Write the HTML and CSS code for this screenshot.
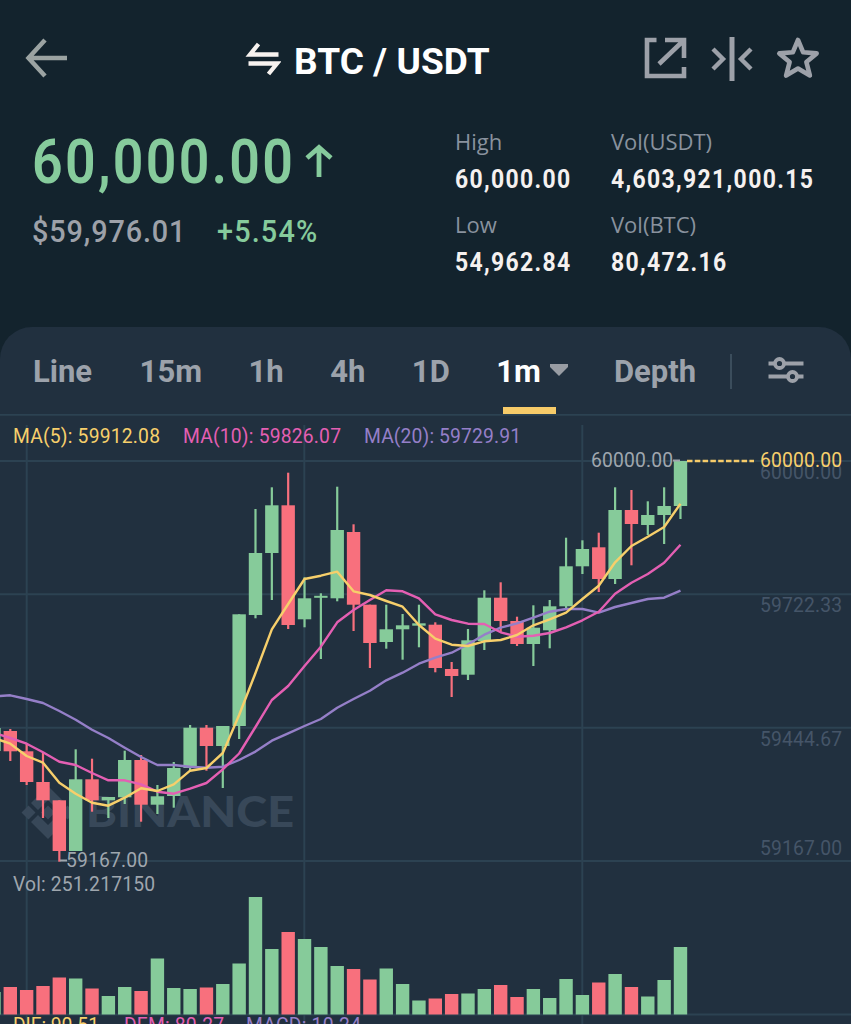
FILE: index.html
```html
<!DOCTYPE html>
<html lang="en">
<head>
<meta charset="utf-8">
<title>BTC / USDT</title>
<link rel="stylesheet" href="styles.css">
</head>
<body>
<main class="app">
  <header class="topbar">
    <svg class="icon back" viewBox="0 0 44 42" width="44" height="42"><path d="M42 20H4M20 2L3.500 20l16.500 18" stroke-width="4.500"/></svg>
    <div class="pair">
      <svg class="icon swap" viewBox="0 0 36 36" width="36" height="36"><path d="M33.500 14.500H5L13.500 4M3.500 23.500H32L23.500 34" stroke-width="4.300"/></svg>
      <h1 class="pair-name">BTC / USDT</h1>
    </div>
    <div class="actions">
      <svg class="icon" viewBox="0 0 44 44" width="44" height="44"><path d="M13.500 4H4v36h37V31M22 4h19v18M39 6L16 28" stroke-width="4.600"/></svg>
      <svg class="icon" viewBox="0 0 44 46" width="44" height="46"><path d="M22 1v44" stroke-width="5"/><path d="M3 13l10 10L3 33M41 13L31 23l10 10" stroke-width="4.400"/></svg>
      <svg class="icon" viewBox="0 0 44 44" width="44" height="44"><path d="M22 4l5.200 12.300 13.500 1.100-10.300 8.700 3.500 13.400L22 32.500 10.100 39.500l3.500-13.400L3.300 17.400l13.500-1.100z" stroke-width="4.600" stroke-linejoin="round"/></svg>
    </div>
  </header>

  <section class="quote">
    <div class="price-block">
      <div class="price-row">
        <span class="price">60,000.00</span>
        <svg class="icon up" viewBox="0 0 28 34" width="28" height="34"><path d="M14 33V4M2 14L14 3.500 26 14" stroke-width="4.800"/></svg>
      </div>
      <div class="sub-row"><span class="fiat">$59,976.01</span><span class="change">+5.54%</span></div>
    </div>
    <dl class="stats">
      <div class="stat"><dt>High</dt><dd>60,000.00</dd></div>
      <div class="stat"><dt>Vol(USDT)</dt><dd>4,603,921,000.15</dd></div>
      <div class="stat"><dt>Low</dt><dd>54,962.84</dd></div>
      <div class="stat"><dt>Vol(BTC)</dt><dd>80,472.16</dd></div>
    </dl>
  </section>

  <section class="panel">
    <nav class="tabs">
      <span class="tab first">Line</span>
      <span class="tab">15m</span>
      <span class="tab">1h</span>
      <span class="tab">4h</span>
      <span class="tab">1D</span>
      <span class="tab active">1m<svg class="caret" viewBox="0 0 18 12" width="18" height="12"><path d="M0 0h18v3L9 12 0 3z"/></svg></span>
      <span class="tab">Depth</span>
      <i class="divider"></i>
      <svg class="icon sliders" viewBox="0 0 36 28" width="36" height="28"><g stroke-width="4.200"><path d="M.500 7.500H7M16 7.500h19.500M.500 20.500H20M29 20.500h6.500"/><circle cx="11.500" cy="7.500" r="4.500" stroke-width="3.800"/><circle cx="24.500" cy="20.500" r="4.500" stroke-width="3.800"/></g></svg>
    </nav>
    <svg class="chart" id="chart" viewBox="0 414 851 610" width="851" height="610">
      <g class="grid">
        <path d="M0 414.700H851M0 461H851M0 594.300H851M0 727.700H851M0 861H851M0 1014.500H851"/>
        <path d="M26.700 425V1024M304.300 425V1024M582.300 425V1024"/>
      </g>
      <g class="watermark">
        <path d="M48 786l17 17-7 7-10-10-10 10-7-7zM28.500 805.500l7 7-7 7-7-7zM67.500 805.500l7 7-7 7-7-7zM48 805.500l7 7-7 7-7-7zM48 839l17-17-7-7-10 10-10-10-7 7z"/>
        <text x="86" y="827" textLength="208" lengthAdjust="spacingAndGlyphs">BINANCE</text>
      </g>
      <g id="volumes"></g>
      <g id="candles"></g>
      <g id="averages"></g>
      <path class="last-line" d="M687 461H754"/>
      <path class="tick" d="M673 460.500H680M60 860.500H67"/>
      <g class="label">
        <text class="ma5" x="13" y="443" textLength="147">MA(5): 59912.08</text>
        <text class="ma10" x="183" y="443" textLength="158">MA(10): 59826.07</text>
        <text class="ma20" x="364" y="443" textLength="157">MA(20): 59729.91</text>
        <text x="591" y="466.500" textLength="82">60000.00</text>
        <text x="66" y="866.500" textLength="82">59167.00</text>
        <text x="13" y="891" textLength="142">Vol: 251.217150</text>
        <g class="axis">
          <text x="760" y="478.500" textLength="82">60000.00</text>
          <text x="760" y="612" textLength="82">59722.33</text>
          <text x="760" y="745.500" textLength="82">59444.67</text>
          <text x="760" y="855" textLength="82">59167.00</text>
        </g>
        <text class="last" x="760" y="466.500" textLength="82">60000.00</text>
        <text class="ma5" x="13" y="1032" textLength="86">DIF: 90.51</text>
        <text class="ma10" x="124" y="1032" textLength="100">DEM: 80.27</text>
        <text class="ma20" x="246" y="1032" textLength="115">MACD: 10.24</text>
      </g>
    </svg>
  </section>
</main>
<script src="chart.js"></script>
</body>
</html>
```
FILE: styles.css
```css
* { box-sizing: border-box; }
body { margin: 0; background: #13232d; font-family: Roboto, "Liberation Sans", sans-serif; }
.app { width: 851px; height: 1024px; overflow: hidden; display: flex; flex-direction: column; background: #13232d; }
.icon { display: block; fill: none; stroke: #9da1a9; }

.topbar { height: 122px; flex: none; display: grid; grid-template-columns: 220px 1fr 220px; padding: 36px 31px 0 25px; }
.back { margin-top: 2px; stroke: #9ba3a2; }
.pair { display: flex; gap: 13px; align-items: flex-start; }
.swap { stroke: #f7f2ef; margin-top: 4px; }
.pair-name { margin: 4px 0 0; font-size: 37px; line-height: 43px; font-weight: 700; letter-spacing: .1px; color: #fff; white-space: nowrap; }
.actions { display: flex; gap: 22.500px; justify-content: flex-end; }

.quote { height: 205px; flex: none; display: flex; padding: 0 0 0 32px; }
.price-block { width: 423px; padding-top: 6px; }
.price-row { display: flex; align-items: flex-start; height: 79px; }
.price { width: 273px; font-size: 61px; line-height: 68px; font-weight: 600; color: #86cb9c; transform: scaleX(.88); transform-origin: 0 0; letter-spacing: 2.600px; }
.up { stroke: #86cb9c; margin-top: 16px; }
.sub-row { display: flex; font-size: 32px; line-height: 48px; font-weight: 500; }
.fiat, .change { transform: scaleX(.9); transform-origin: 0 0; letter-spacing: 1px; }
.fiat { width: 185px; color: #9da1a9; }
.change { color: #86cb9c; letter-spacing: 1.300px; }
.stats { margin: 5px 0 0; display: grid; grid-template-columns: 156px 220px; grid-auto-rows: 83.300px; }
.stat dt { font-family: "Open Sans", sans-serif; font-size: 22px; line-height: 28px; color: #89929e; }
.stat dd { margin: 8px 0 0; font-size: 25.500px; line-height: 32px; font-weight: 700; color: #f5f1f0; white-space: nowrap; transform: scaleX(.9); transform-origin: 0 0; letter-spacing: 1.500px; }

.panel { flex: none; height: 697px; background: #21303f; border-radius: 32px 32px 0 0; overflow: hidden; }
.tabs { height: 87px; display: flex; align-items: flex-start; padding: 27px 0 0 33px; font-size: 31px; line-height: 36px; font-weight: 700; color: #9ca2ab; }
.tab { height: 60px; margin-right: 46.500px; white-space: nowrap; }
.tab.first { margin-right: 47.500px; }
.tab.active { display: flex; gap: 9px; color: #fff; position: relative; margin-right: 46px; }
.active::after { content: ""; position: absolute; left: 7px; bottom: 0; width: 53px; height: 7px; background: #f7cb69; }
.caret { fill: #989ca3; margin-top: 10px; }
.divider { width: 2px; height: 35px; background: #3b4d5c; margin: 0 36px 0 -13px; }
.sliders { margin-top: 2px; }

.chart { display: block; }
.grid { stroke: #2c4252; stroke-width: 2; fill: none; }
.watermark { fill: #384859; }
.watermark text { font: 900 42px Lato, "Open Sans", sans-serif; }
.up-bar { fill: #86cb9a; }
.down-bar { fill: #f8707d; }
.line { fill: none; stroke-width: 2.400; stroke-linejoin: round; }
.line5 { stroke: #f7cf6b; }
.line10 { stroke: #e45fb3; }
.line20 { stroke: #957fc8; }
.last-line { stroke: #f7cb69; stroke-width: 2.400; stroke-dasharray: 5.500 2.300; }
.tick { stroke: #9fa6ae; stroke-width: 2; }
.label { font-size: 19.300px; fill: #9fa6ae; }
.axis { fill: #455568; }
.label .ma5, .label .last { fill: #f7cf6b; }
.label .ma10 { fill: #e45fb3; }
.label .ma20 { fill: #957fc8; }
```
FILE: chart.js
```js
const STEP = 16.346, FIRST = 10.3, BODY = 13.4, BASE = 1014.5;
const NS = 'http://www.w3.org/2000/svg';
// [direction, body top, body bottom, wick top, wick bottom]
const candles = [
  ['d',731,751.3,729,761],['d',751.3,782,744,785],['d',782,800.3,752.7,818],['d',800.3,851,800.3,861.7],
  ['u',779.3,851,749.3,851],['d',779.3,800.3,758.7,811.7],['u',797,800.3,797,818],['u',760,797.3,750.7,804],
  ['d',760,804.7,755,821.7],['u',796.3,804.7,785,814],['u',768,796,762,807.7],['u',727.7,768,725,770.7],
  ['d',727.7,746,725,770.7],['u',726,746,726,788],['u',614.3,726,614.3,739],['u',553,615,509,618.3],
  ['u',505.3,553,487.3,600],['d',505.3,625,472.7,629],['u',598.3,619.3,577.3,627.3],['u',595.8,597.8,593.3,659],
  ['u',530,598.3,486.7,601.3],['d',532,604.7,524.3,631],['d',604.7,643,604.7,668],['u',629.3,642,604.7,648.7],
  ['u',625.3,629.3,614,659.7],['u',623.3,625.7,604.7,647.3],['d',624.7,668,622.3,672.3],['d',669,676,662,697],
  ['u',640.3,674.7,629,680],['u',597.7,641,590.3,650],['d',597.7,621,582.3,632],['d',621,644,616.7,646],
  ['u',627.7,644,605.3,666],['u',606.3,630.3,600,648.3],['u',566.3,606.3,537.7,608.3],['u',549,566.3,540.3,574],
  ['d',547.3,579,532.7,592],['u',510,579,487.3,584],['d',510,524,490,565.3],['u',515,525,501.3,535],
  ['u',506,515,487.3,544],['u',461,506,461,519]
];
const volumes = [27.5,24.5,28.5,37,36,26,18.5,27.5,23.5,56,26.5,25.5,27,30.5,51,117.5,65.5,82.5,75.5,67.5,48.5,45.5,35,46,30.5,14,16,20.5,21,25.5,29.5,17.5,25.5,16.5,35.5,19.5,32,40.5,27.5,18,34.5,67.5];
const averages = {
  line20: [696.3,695.3,699,703,711,719.7,729.7,738,747.7,757,765,765,766.7,767.7,766.7,760,751.6,740.7,733.3,726,719,707.7,699,690.7,680.3,672.7,663.7,657.7,652.7,644.2,634.7,627.7,623.3,617.7,611.7,609,609,612.7,607,603,599,597.7,590.7],
  line10: [733,738,743.7,752.3,761.7,765,773,780.3,780.3,784.3,791.7,793.7,788.7,783,769.3,753.5,727,700,686,666,646.7,622.3,610,600,590.3,591.3,598.3,614.3,620,623.7,624,632.3,636.7,635.7,633,627.3,620.3,611.7,593.7,582.7,574,562.7,544.7],
  line5: [738,743.7,756,762.7,782.7,793.7,802.7,805.7,797.7,788.3,791,784.3,770.7,768,753,715,673,629.3,604,579,575.7,571.7,591.3,595,601,606.7,625,638.7,644.7,646,641.3,640,635,625.3,619.3,612.7,599,585.7,562.3,546,536.7,527,503.7]
};
const add = (parent, tag, attrs) => {
  const node = document.createElementNS(NS, tag);
  for (const key in attrs) node.setAttribute(key, attrs[key]);
  document.getElementById(parent).appendChild(node);
};
const rect = (parent, dir, x, y, width, height) =>
  add(parent, 'rect', { class: dir === 'u' ? 'up-bar' : 'down-bar', x, y, width, height });

rect('candles', 'u', -12.7, 728, 13.4, 23);
rect('volumes', 'u', -12.7, 992, 13.4, 22.5);
candles.forEach(([dir, top, bottom, high, low], i) => {
  const x = FIRST + i * STEP;
  rect('candles', dir, x - 1.1, high, 2.2, low - high);
  rect('candles', dir, x - BODY / 2, top, BODY, bottom - top);
  rect('volumes', dir, x - BODY / 2, BASE - volumes[i], BODY, volumes[i]);
});
for (const name in averages) {
  const points = averages[name].map((y, i) => `${FIRST + (i - 1) * STEP},${y}`).join(' ');
  add('averages', 'polyline', { class: 'line ' + name, points });
}
```
